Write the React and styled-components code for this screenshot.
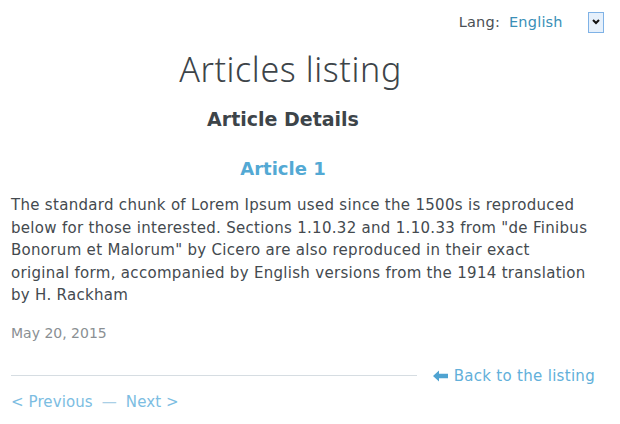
import React from 'react'
import styled, { createGlobalStyle } from 'styled-components'

const GlobalStyle = createGlobalStyle`
	body {
		margin: 0;
		background: #fff;
		font-family: 'DejaVu Sans', 'Noto Sans', sans-serif;
		color: #444a4f;
	}
`

const Page = styled.div`
	width: 620px;
	height: 424px;
	box-sizing: border-box;
	padding: 7px 16px 0 11px;
	display: flex;
	flex-direction: column;
`

const LangBar = styled.div`
	display: flex;
	justify-content: flex-end;
	align-items: center;
	font-size: 14.5px;
	letter-spacing: 0.2px;
	height: 30px;
`

const LangLabel = styled.span`
	color: #4a5055;
	margin-right: 9px;
`

const LangValue = styled.span`
	color: #3a8fb7;
	width: 79px;
`

const SelectBox = styled.span`
	display: flex;
	align-items: center;
	justify-content: center;
	width: 14px;
	height: 19px;
	border: 1px solid #7fb2e6;
	background: #e6f0fb;
`

const Content = styled.div`
	padding-right: 9px;
	display: flex;
	flex-direction: column;
	letter-spacing: 0.3px;
`

const Title = styled.h1`
	margin: 10px 0 0;
	padding-right: 25px;
	text-align: center;
	font-family: 'Noto Sans', sans-serif;
	font-weight: 300;
	font-size: 34px;
	letter-spacing: 0.6px;
	line-height: 44px;
	color: #3d4449;
`

const Subtitle = styled.h2`
	margin: 15px 0 0;
	padding-right: 40px;
	text-align: center;
	font-weight: 700;
	font-size: 19px;
	letter-spacing: 0;
	line-height: 26px;
	color: #3d4449;
`

const ArticleTitle = styled.h3`
	margin: 23px 0 0;
	padding-right: 40px;
	text-align: center;
	font-weight: 700;
	font-size: 18px;
	letter-spacing: 0;
	line-height: 28px;
	color: #53a9d4;
`

const Body = styled.p`
	margin: 11px 0 0;
	width: 579px;
	font-size: 15px;
	line-height: 22.5px;
	color: #444a4f;
`

const Date = styled.div`
	margin-top: 18px;
	font-size: 14px;
	letter-spacing: 0;
	color: #8a8f93;
`

const FooterRow = styled.div`
	display: flex;
	align-items: center;
	margin-top: 26px;
`

const Rule = styled.div`
	flex: 1;
	height: 1px;
	background: #d6dde2;
	margin-right: 16px;
`

const BackLink = styled.a`
	display: flex;
	align-items: center;
	gap: 6px;
	font-size: 15px;
	color: #62b0da;
	text-decoration: none;
`

const Pager = styled.div`
	display: flex;
	gap: 9px;
	margin-top: 8px;
	font-size: 15px;
	letter-spacing: 0.1px;
	color: #7cbde2;
`

const Dash = styled.span`
	color: #a9cfe6;
`

const App = () => (
	<>
		<GlobalStyle />
		<Page>
			<LangBar>
				<LangLabel>Lang:</LangLabel>
				<LangValue>English</LangValue>
				<SelectBox>
					<svg width="8" height="6" viewBox="0 0 8 6">
						<path d="M1 1l3 3 3-3" fill="none" stroke="#111" strokeWidth="2" />
					</svg>
				</SelectBox>
			</LangBar>
			<Content>
				<Title>Articles listing</Title>
				<Subtitle>Article Details</Subtitle>
				<ArticleTitle>Article 1</ArticleTitle>
				<Body>
					The standard chunk of Lorem Ipsum used since the 1500s is reproduced below for those
					interested. Sections 1.10.32 and 1.10.33 from "de Finibus Bonorum et Malorum" by Cicero
					are also reproduced in their exact original form, accompanied by English versions from
					the 1914 translation by H. Rackham
				</Body>
				<Date>May 20, 2015</Date>
				<FooterRow>
					<Rule />
					<BackLink href="#">
						<svg width="15" height="12" viewBox="0 0 15 12">
							<path d="M0 6L6 0.5V3.8H15V8.2H6V11.5Z" fill="#4fa3d1" />
						</svg>
						Back to the listing
					</BackLink>
				</FooterRow>
				<Pager>
					<span>&lt; Previous</span>
					<Dash>—</Dash>
					<span>Next &gt;</span>
				</Pager>
			</Content>
		</Page>
	</>
)

export default App
